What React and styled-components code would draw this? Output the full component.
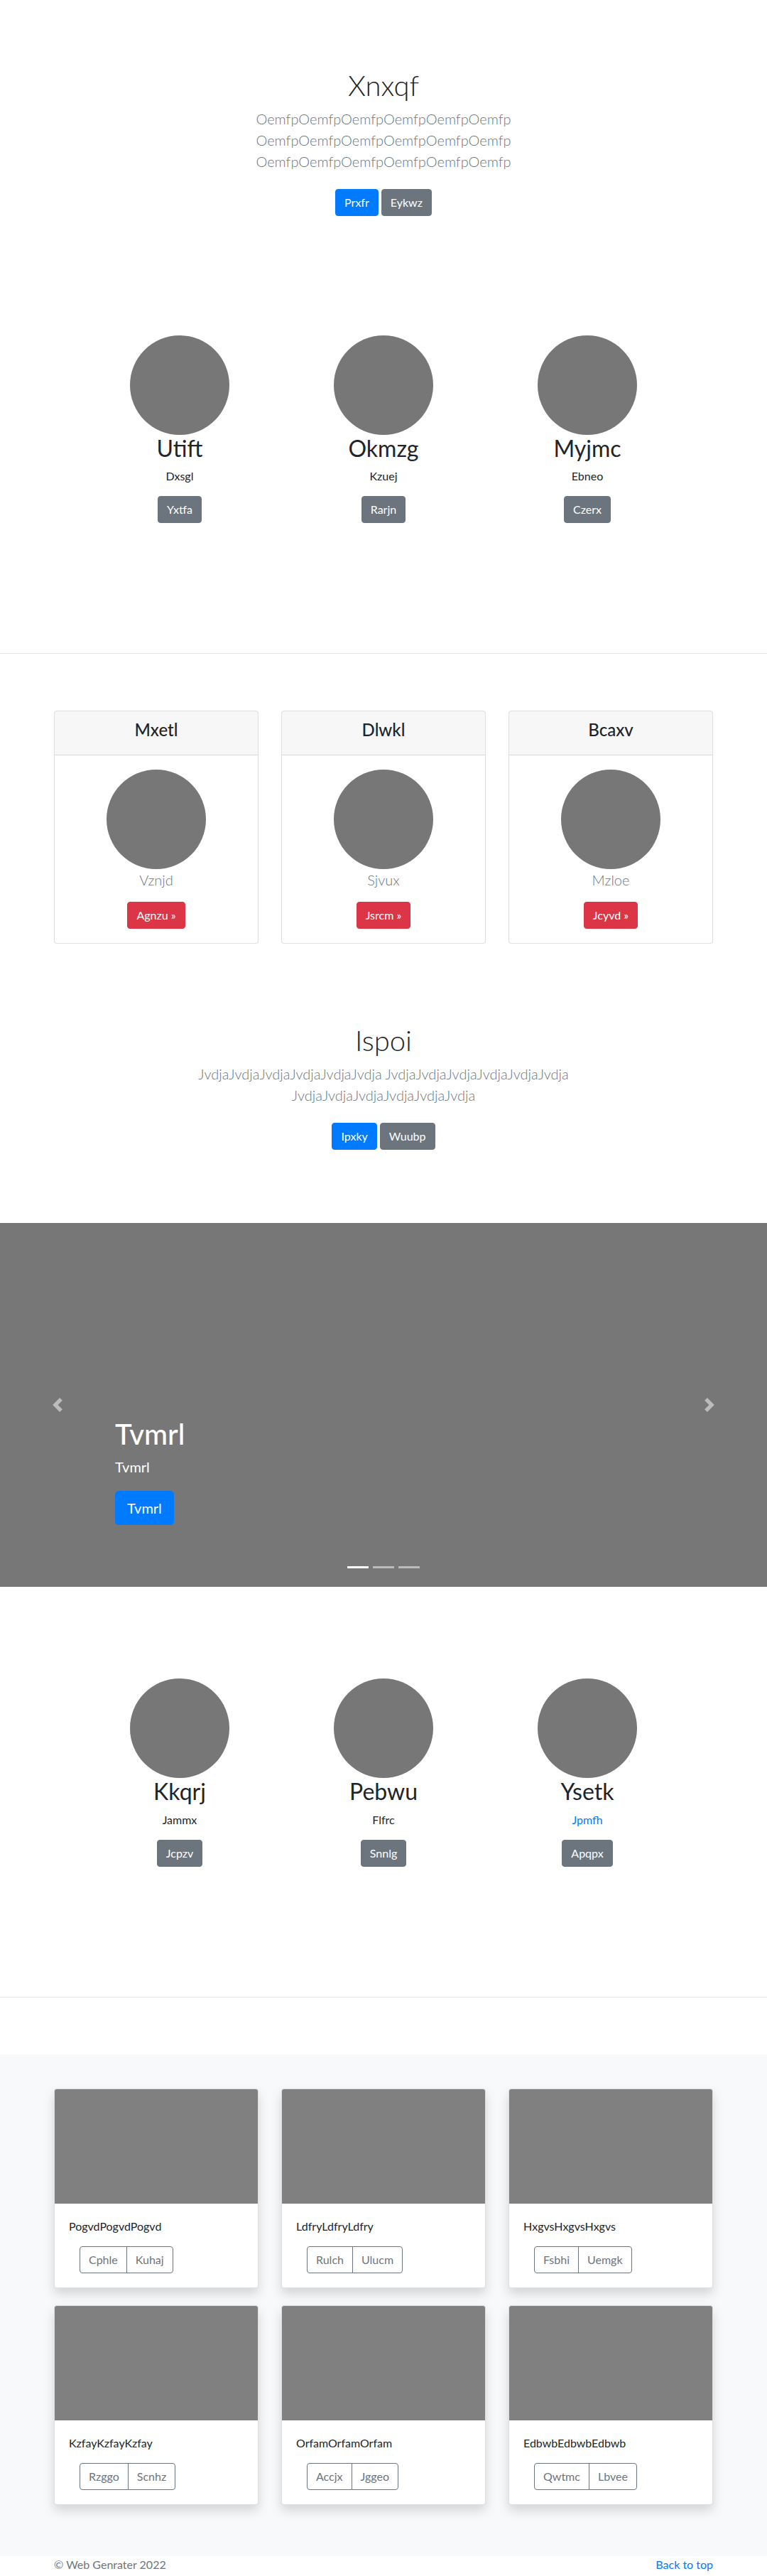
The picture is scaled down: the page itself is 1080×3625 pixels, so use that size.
import React from "react";
import styled, { createGlobalStyle } from "styled-components";

const GlobalStyle = createGlobalStyle`
  *, *::before, *::after { box-sizing: border-box; }
  html, body { margin: 0; padding: 0; }
  body {
    font-family: Lato, Roboto, "Liberation Sans", Arial, sans-serif;
    font-size: 16px;
    line-height: 1.5;
    color: #212529;
    background: #fff;
  }
  h1, h2, h3, h4, p, ol { margin: 0; }
`;

const palette = {
  primary: { bg: "#007bff", border: "#007bff", color: "#fff" },
  secondary: { bg: "#6c757d", border: "#6c757d", color: "#fff" },
  danger: { bg: "#dc3545", border: "#dc3545", color: "#fff" },
  outline: { bg: "transparent", border: "#6c757d", color: "#6c757d" },
};

const Btn = styled.a`
  display: inline-block;
  font-family: inherit;
  font-weight: 400;
  font-size: ${(p) => (p.$lg ? "20px" : "16px")};
  line-height: 1.5;
  padding: ${(p) => (p.$lg ? "8px 16px" : "6px 12px")};
  border-radius: ${(p) => (p.$lg ? "4.8px" : "4px")};
  border: 1px solid ${(p) => palette[p.$variant].border};
  background: ${(p) => palette[p.$variant].bg};
  color: ${(p) => palette[p.$variant].color};
  text-decoration: none;
  white-space: nowrap;
  cursor: pointer;
`;

/* ---------- Jumbotron ---------- */
const Jumbotron = styled.section`
  text-align: center;
  padding: 96px 15px 79px;
`;
const JumboInner = styled.div`
  max-width: 610px;
  margin: 0 auto;
`;
const JumboTitle = styled.h1`
  font-size: 40px;
  font-weight: 300;
  line-height: 48px;
  margin-bottom: 8px;
`;
const Lead = styled.p`
  font-size: 20px;
  font-weight: 300;
  line-height: 30px;
  color: #6c757d;
  margin-bottom: 16px;
`;
const ButtonRow = styled.div`
  display: flex;
  justify-content: center;
  gap: 4px;
  padding: 8px 0;
  margin-bottom: 16px;
`;

/* ---------- Team ---------- */
const TeamSection = styled.section`
  padding: 65px 0 103px;
`;
const TeamRow = styled.div`
  width: 861px;
  margin: 0 auto;
  display: grid;
  grid-template-columns: repeat(3, 1fr);
`;
const TeamCol = styled.div`
  display: flex;
  flex-direction: column;
  align-items: center;
  text-align: center;
`;
const Avatar = styled.div`
  width: 140px;
  height: 140px;
  border-radius: 50%;
  background: #777;
  flex: none;
`;
const TeamName = styled.h2`
  font-size: 32px;
  font-weight: 400;
  line-height: 38.4px;
  margin-bottom: 8px;
`;
const TeamText = styled.p`
  margin-bottom: 16px;
  color: ${(p) => (p.$link ? "#007bff" : "#212529")};
`;

const Divider = styled.hr`
  border: 0;
  border-top: 1px solid rgba(0, 0, 0, 0.1);
  height: 0;
  margin: 80px 0;
`;

/* ---------- Cards ---------- */
const Container = styled.div`
  width: 928px;
  margin: 0 auto;
`;
const CardGrid = styled.div`
  display: grid;
  grid-template-columns: repeat(3, 288px);
  column-gap: 32px;
  row-gap: ${(p) => p.$rowGap}px;
  margin-bottom: ${(p) => p.$rowGap}px;
`;
const PriceCard = styled.div`
  border: 1px solid rgba(0, 0, 0, 0.125);
  border-radius: 4px;
  background: #fff;
  text-align: center;
  overflow: hidden;
`;
const CardHeader = styled.div`
  background: rgba(0, 0, 0, 0.03);
  border-bottom: 1px solid rgba(0, 0, 0, 0.125);
  padding: 12px 20px;
`;
const CardTitle = styled.h4`
  font-size: 24px;
  font-weight: 500;
  line-height: 28.8px;
  margin-bottom: 8px;
`;
const PriceBody = styled.div`
  padding: 20px;
  display: flex;
  flex-direction: column;
  align-items: center;
`;

/* ---------- Carousel ---------- */
const Carousel = styled.div`
  position: relative;
  height: 512px;
  background: #777;
  margin-bottom: 64px;
  overflow: hidden;
`;
const Slide = styled.div`
  height: 100%;
  display: flex;
  flex-direction: column;
  justify-content: flex-end;
  align-items: flex-start;
  padding: 0 15% 87px;
  color: #fff;
`;
const SlideTitle = styled.h1`
  font-size: 40px;
  font-weight: 500;
  line-height: 48px;
  margin-bottom: 8px;
`;
const SlideText = styled.p`
  font-size: 20px;
  line-height: 28px;
  margin-bottom: 20px;
`;
const Control = styled.a`
  position: absolute;
  top: 0;
  bottom: 0;
  ${(p) => p.$side}: 0;
  width: 15%;
  display: flex;
  align-items: center;
  justify-content: center;
  opacity: 0.5;
`;
const Indicators = styled.ol`
  position: absolute;
  left: 0;
  right: 0;
  bottom: 0;
  margin: 0 15% 16px;
  padding: 0;
  list-style: none;
  display: flex;
  justify-content: center;
`;
const Indicator = styled.li`
  width: 30px;
  height: 3px;
  margin: 10px 3px;
  background: #fff;
  opacity: ${(p) => (p.$active ? 1 : 0.5)};
`;

/* ---------- Album ---------- */
const AlbumSection = styled.section`
  background: #f8f9fa;
  padding: 48px 0;
`;
const AlbumCard = styled.div`
  background: #fff;
  border: 1px solid rgba(0, 0, 0, 0.125);
  border-radius: 4px;
  box-shadow: 0 8px 16px rgba(0, 0, 0, 0.15);
  overflow: hidden;
`;
const Thumb = styled.div`
  height: 161px;
  background: #808080;
`;
const AlbumBody = styled.div`
  padding: 20px;
`;
const CardText = styled.p`
  margin-bottom: 16px;
`;
const BtnGroup = styled.div`
  display: inline-flex;
  margin-left: 15px;
  & > ${Btn}:first-child {
    border-top-right-radius: 0;
    border-bottom-right-radius: 0;
  }
  & > ${Btn}:last-child {
    margin-left: -1px;
    border-top-left-radius: 0;
    border-bottom-left-radius: 0;
  }
`;

/* ---------- Footer ---------- */
const Footer = styled.footer`
  width: 928px;
  margin: 0 auto;
  display: flex;
  justify-content: space-between;
  color: #6c757d;
  line-height: 24px;
`;
const FooterLink = styled.a`
  color: #007bff;
  text-decoration: none;
`;

const Chevron = ({ dir }) => (
  <svg width="20" height="20" viewBox="0 0 8 8" fill="#fff" aria-hidden="true">
    {dir === "prev" ? (
      <path d="M5.25 0l-4 4 4 4 1.5-1.5L4.25 4l2.5-2.5L5.25 0z" />
    ) : (
      <path d="M2.75 0l-1.5 1.5L3.75 4l-2.5 2.5L2.75 8l4-4-4-4z" />
    )}
  </svg>
);

const Hero = ({ title, lines, primary, secondary }) => (
  <Jumbotron>
    <JumboInner>
      <JumboTitle>{title}</JumboTitle>
      <Lead>{lines}</Lead>
      <ButtonRow>
        <Btn $variant="primary">{primary}</Btn>
        <Btn $variant="secondary">{secondary}</Btn>
      </ButtonRow>
    </JumboInner>
  </Jumbotron>
);

const Team = ({ people }) => (
  <TeamSection>
    <TeamRow>
      {people.map((p) => (
        <TeamCol key={p.name}>
          <Avatar />
          <TeamName>{p.name}</TeamName>
          <TeamText $link={p.link}>{p.text}</TeamText>
          <Btn $variant="secondary">{p.btn}</Btn>
        </TeamCol>
      ))}
    </TeamRow>
  </TeamSection>
);

const rep = (w, n) => Array(n).fill(w).join("");

const team1 = [
  { name: "Utift", text: "Dxsgl", btn: "Yxtfa" },
  { name: "Okmzg", text: "Kzuej", btn: "Rarjn" },
  { name: "Myjmc", text: "Ebneo", btn: "Czerx" },
];
const team2 = [
  { name: "Kkqrj", text: "Jammx", btn: "Jcpzv" },
  { name: "Pebwu", text: "Flfrc", btn: "Snnlg" },
  { name: "Ysetk", text: "Jpmfh", btn: "Apqpx", link: true },
];
const pricing = [
  { title: "Mxetl", text: "Vznjd", btn: "Agnzu" },
  { title: "Dlwkl", text: "Sjvux", btn: "Jsrcm" },
  { title: "Bcaxv", text: "Mzloe", btn: "Jcyvd" },
];
const album = [
  { text: "Pogvd", a: "Cphle", b: "Kuhaj" },
  { text: "Ldfry", a: "Rulch", b: "Ulucm" },
  { text: "Hxgvs", a: "Fsbhi", b: "Uemgk" },
  { text: "Kzfay", a: "Rzggo", b: "Scnhz" },
  { text: "Orfam", a: "Accjx", b: "Jggeo" },
  { text: "Edbwb", a: "Qwtmc", b: "Lbvee" },
];

export default function App() {
  const oem = rep("Oemfp", 6);
  const jvd = rep("Jvdja", 6);
  return (
    <>
      <GlobalStyle />
      <Hero title="Xnxqf" lines={`${oem} ${oem} ${oem}`} primary="Prxfr" secondary="Eykwz" />
      <Team people={team1} />
      <Divider />
      <Container>
        <CardGrid $rowGap={16}>
          {pricing.map((c) => (
            <PriceCard key={c.title}>
              <CardHeader>
                <CardTitle>{c.title}</CardTitle>
              </CardHeader>
              <PriceBody>
                <Avatar />
                <Lead>{c.text}</Lead>
                <Btn $variant="danger">{c.btn} »</Btn>
              </PriceBody>
            </PriceCard>
          ))}
        </CardGrid>
      </Container>
      <Hero title="Ispoi" lines={`${jvd} ${jvd} ${jvd}`} primary="Ipxky" secondary="Wuubp" />
      <Carousel>
        <Slide>
          <SlideTitle>Tvmrl</SlideTitle>
          <SlideText>Tvmrl</SlideText>
          <Btn $variant="primary" $lg>Tvmrl</Btn>
        </Slide>
        <Control $side="left"><Chevron dir="prev" /></Control>
        <Control $side="right"><Chevron dir="next" /></Control>
        <Indicators>
          <Indicator $active />
          <Indicator />
          <Indicator />
        </Indicators>
      </Carousel>
      <Team people={team2} />
      <Divider />
      <AlbumSection>
        <Container>
          <CardGrid $rowGap={24}>
            {album.map((c) => (
              <AlbumCard key={c.text}>
                <Thumb />
                <AlbumBody>
                  <CardText>{rep(c.text, 3)}</CardText>
                  <BtnGroup>
                    <Btn $variant="outline">{c.a}</Btn>
                    <Btn $variant="outline">{c.b}</Btn>
                  </BtnGroup>
                </AlbumBody>
              </AlbumCard>
            ))}
          </CardGrid>
        </Container>
      </AlbumSection>
      <Footer>
        <span>© Web Genrater 2022</span>
        <FooterLink href="#">Back to top</FooterLink>
      </Footer>
    </>
  );
}
